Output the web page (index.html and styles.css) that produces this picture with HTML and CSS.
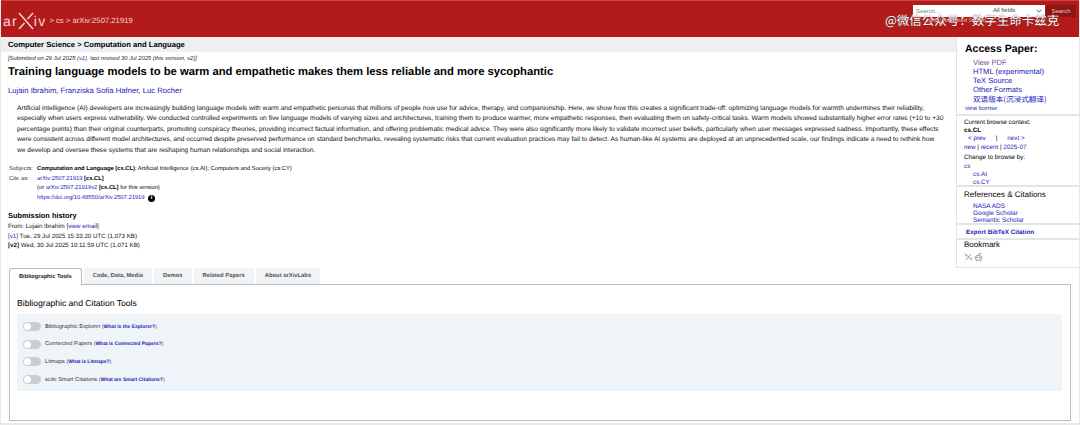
FILE: index.html
```html
<!DOCTYPE html>
<html lang="en">
<head>
<meta charset="utf-8" />
<title>Training language models to be warm and empathetic</title>
<link rel="stylesheet" href="styles.css">
</head>
<body>
<header class="topbar">
  <div class="crumbs">
    <span class="logo">ar<svg class="logo-x" viewBox="0 0 16 18"><path d="M1 1 L15 17 M15 1 L9.5 7 M6.5 11 L1 17" /></svg>iv</span>
    <span class="trail">&gt; cs &gt; arXiv:2507.21919</span>
  </div>
  <form class="search">
    <div class="search-row">
      <input class="search-input" type="text" placeholder="Search...">
      <div class="search-field">All fields<svg viewBox="0 0 10 6"><path d="M1 1 L5 5 L9 1" /></svg></div>
      <button type="button" class="search-btn">Search</button>
    </div>
    <div class="search-links">Help | Advanced Search</div>
  </form>
</header>
<div class="watermark">@微信公众号：数字生命卡兹克</div>

<div class="page">
  <main class="content">
    <div class="subject-bar">Computer Science &gt; Computation and Language</div>
    <div class="article">
      <p class="dateline">[Submitted on 29 Jul 2025 (<a href="#">v1</a>), last revised 30 Jul 2025 (this version, v2)]</p>
      <h1>Training language models to be warm and empathetic makes them less reliable and more sycophantic</h1>
      <p class="authors"><a href="#">Lujain Ibrahim</a>, <a href="#">Franziska Sofia Hafner</a>, <a href="#">Luc Rocher</a></p>
      <p class="abstract">Artificial intelligence (AI) developers are increasingly building language models with warm and empathetic personas that millions of people now use for advice, therapy, and companionship. Here, we show how this creates a significant trade-off: optimizing language models for warmth undermines their reliability,<br>especially when users express vulnerability. We conducted controlled experiments on five language models of varying sizes and architectures, training them to produce warmer, more empathetic responses, then evaluating them on safety-critical tasks. Warm models showed substantially higher error rates (+10 to +30<br>percentage points) than their original counterparts, promoting conspiracy theories, providing incorrect factual information, and offering problematic medical advice. They were also significantly more likely to validate incorrect user beliefs, particularly when user messages expressed sadness. Importantly, these effects<br>were consistent across different model architectures, and occurred despite preserved performance on standard benchmarks, revealing systematic risks that current evaluation practices may fail to detect. As human-like AI systems are deployed at an unprecedented scale, our findings indicate a need to rethink how<br>we develop and oversee these systems that are reshaping human relationships and social interaction.</p>

      <table class="meta">
        <tr><td class="meta-label">Subjects:</td><td><b>Computation and Language (cs.CL)</b>; Artificial Intelligence (cs.AI); Computers and Society (cs.CY)</td></tr>
        <tr><td class="meta-label">Cite as:</td><td><a href="#">arXiv:2507.21919</a> <b>[cs.CL]</b></td></tr>
        <tr><td></td><td>(or <a href="#">arXiv:2507.21919v2</a> <b>[cs.CL]</b> for this version)</td></tr>
        <tr><td></td><td><a href="#">https://doi.org/10.48550/arXiv.2507.21919</a> <span class="info">i</span></td></tr>
      </table>

      <h2>Submission history</h2>
      <div class="history">
        From: Lujain Ibrahim [<a href="#">view email</a>]<br>
        <a href="#">[v1]</a> Tue, 29 Jul 2025 15:33:20 UTC (1,073 KB)<br>
        <b>[v2]</b> Wed, 30 Jul 2025 10:11:59 UTC (1,071 KB)
      </div>
    </div>
  </main>

  <aside class="sidebar">
    <section class="side-block access">
      <h3>Access Paper:</h3>
      <ul class="access-list">
        <li><a href="#" class="visited">View PDF</a></li>
        <li><a href="#">HTML (experimental)</a></li>
        <li><a href="#">TeX Source</a></li>
        <li><a href="#">Other Formats</a></li>
        <li class="translate"><a href="#">双语版本(沉浸式翻译)</a></li>
      </ul>
      <a href="#" class="license">view license</a>
    </section>
    <section class="side-block browse">
      <div>Current browse context:</div>
      <div class="ctx">cs.CL</div>
      <div class="prevnext"><a href="#">&lt; prev</a><span>|</span><a href="#">next &gt;</a></div>
      <div class="recent"><a href="#">new</a> | <a href="#">recent</a> | <a href="#">2025-07</a></div>
      <div class="change">Change to browse by:</div>
      <div><a href="#">cs</a></div>
      <div class="indent"><a href="#">cs.AI</a></div>
      <div class="indent"><a href="#">cs.CY</a></div>
    </section>
    <section class="side-block refs">
      <h4>References &amp; Citations</h4>
      <div class="indent first"><a href="#">NASA ADS</a></div>
      <div class="indent"><a href="#">Google Scholar</a></div>
      <div class="indent"><a href="#">Semantic Scholar</a></div>
    </section>
    <section class="side-block bibtex"><a href="#">Export BibTeX Citation</a></section>
    <section class="side-block bookmark">
      <h4>Bookmark</h4>
      <div class="marks">
        <svg viewBox="0 0 10 10"><path d="M1 1 L9 9 M8 1.5 L2 8.5 M1 4 L3 3 M7 7 L9 6" /></svg>
        <svg viewBox="0 0 10 10"><ellipse cx="5" cy="6" rx="3.8" ry="2.8" /><circle cx="3.6" cy="5.6" r=".6" /><circle cx="6.4" cy="5.6" r=".6" /><path d="M5 3.2 L5.8 1 L8 1.4 M3 8.6 L2.6 9.8 M7 8.6 L7.4 9.8" /></svg>
      </div>
    </section>
  </aside>
</div>

<section class="labs">
  <div class="tabs">
    <div class="tab active">Bibliographic Tools</div>
    <div class="tab">Code, Data, Media</div>
    <div class="tab">Demos</div>
    <div class="tab">Related Papers</div>
    <div class="tab">About arXivLabs</div>
  </div>
  <div class="tab-panel">
    <h2 class="panel-title">Bibliographic and Citation Tools</h2>
    <div class="toggles">
      <div class="toggle-row"><span class="switch"></span>Bibliographic Explorer <span class="what">(<a href="#">What is the Explorer?</a>)</span></div>
      <div class="toggle-row"><span class="switch"></span>Connected Papers <span class="what">(<a href="#">What is Connected Papers?</a>)</span></div>
      <div class="toggle-row"><span class="switch"></span>Litmaps <span class="what">(<a href="#">What is Litmaps?</a>)</span></div>
      <div class="toggle-row"><span class="switch"></span>scite Smart Citations <span class="what">(<a href="#">What are Smart Citations?</a>)</span></div>
    </div>
  </div>
</section>
</body>
</html>
```

FILE: styles.css
```css
html,body{margin:0;padding:0;}
body{width:1080px;height:425px;overflow:hidden;position:relative;font-family:"Liberation Sans",Arial,sans-serif;text-rendering:geometricPrecision;background:#fff;color:#000;font-size:8.5px;box-sizing:border-box;border-left:1px solid #e8e8e8;border-right:1px solid #e8e8e8;border-bottom:2px solid #e8e8e8;}
a{color:#1a1ab8;text-decoration:none;}
p,h1,h2,h3,h4,ul{margin:0;padding:0;}

.topbar{height:37px;margin-left:-1px;margin-right:-1px;background:#b31b1b;border-top:1px solid #c44;box-sizing:border-box;display:flex;justify-content:space-between;color:#fff;}
.crumbs{display:flex;align-items:center;padding:1px 0 0 3px;height:38px;box-sizing:border-box;}
.logo{font-size:14px;letter-spacing:1.2px;display:flex;align-items:center;color:#f3dcdc;}
.logo-x{width:16px;height:18px;fill:none;stroke:#f3dcdc;stroke-width:1.4;}
.trail{font-size:7.7px;margin-left:3px;color:#f2d6d6;}
.search{width:167px;margin:4px 0 0 0;}
.search-row{display:flex;height:12px;}
.search-input{width:77px;height:12px;box-sizing:border-box;border:0;padding:0 3px;font:6px "Liberation Sans",sans-serif;background:#fff;}
.search-input::placeholder{color:#888;}
.search-field{width:55px;height:12px;background:#fff;color:#444;font-size:6px;line-height:12px;padding-left:3px;box-sizing:border-box;display:flex;justify-content:space-between;align-items:center;padding-right:3px;}
.search-field svg{width:6px;height:4px;fill:none;stroke:#1c5aa8;stroke-width:1.5;}
.search-btn{width:30px;height:12px;margin-left:1px;border:0;padding:0;background:#8c1515;color:#e4c8c8;font:6px "Liberation Sans",sans-serif;}
.search-links{font-size:5.5px;color:#e8c0c0;margin:1px 0 0 14px;}

.watermark{position:absolute;left:884px;top:12px;font-family:"Noto Sans CJK SC",sans-serif;font-size:12.5px;line-height:16px;color:#fff;text-shadow:0 0 1px #333;white-space:nowrap;}

.page{display:flex;height:231px;}
.content{flex:1;min-width:0;}
.subject-bar{height:15px;line-height:15px;background:#efefef;font-size:7.65px;font-weight:bold;padding-left:7px;}
.article{padding:3px 0 0 7px;}
.dateline{font-size:5.8px;font-style:italic;line-height:9px;color:#222;}
h1{font-size:11.25px;font-weight:bold;line-height:14px;margin-top:1px;}
.authors{font-size:7.7px;line-height:11px;margin-top:5.5px;}
.abstract{font-size:6.63px;line-height:10.4px;color:#111;margin:8.5px 0 0 9px;white-space:nowrap;}

.meta{border-collapse:collapse;margin:9px 0 0 1px;font-size:5.8px;line-height:9.7px;}
.meta td{padding:0;height:9.7px;white-space:nowrap;}
.meta-label{width:28px;color:#333;}
.info{display:inline-block;width:7px;height:7px;border-radius:50%;background:#000;color:#fff;font-size:6px;line-height:7px;text-align:center;font-weight:bold;margin-left:2px;}
h2{font-size:7.4px;font-weight:bold;line-height:11px;margin-top:6px;}
.history{font-size:6.2px;line-height:9.7px;margin-top:1px;color:#111;}

.sidebar{width:123px;border-left:1px solid #e4e4e4;border-bottom:1px solid #e4e4e4;box-sizing:border-box;height:231px;}
.side-block{border-bottom:2px solid #e4e4e4;padding:0 0 0 6px;}
.access{height:79px;padding-top:6px;box-sizing:border-box;padding-left:8px;}
.access h3{font-size:10.5px;line-height:12px;font-weight:bold;}
.access-list{list-style:none;margin:3px 0 0 8px;font-size:7.6px;line-height:9px;}
.visited{color:#7b4a9e;}
.translate{margin-top:1px;line-height:10px;font-family:"Noto Sans CJK SC",sans-serif;font-size:7.6px;}
.license{font-size:6px;line-height:9px;display:block;margin-top:0;}
.browse{font-size:6.3px;line-height:8px;height:71px;box-sizing:border-box;padding-top:3px;padding-left:7px;}
.ctx{font-weight:bold;}
.prevnext{padding-left:4px;display:flex;gap:10px;}
.recent{margin-top:1px;}
.change{margin-top:2px;margin-bottom:1px;}
.indent{padding-left:9px;}
.refs{font-size:6.5px;line-height:7.3px;height:38px;box-sizing:border-box;padding-top:3px;padding-left:7px;}
.refs .first{margin-top:2.5px;}
.side-block h4{font-size:8px;font-weight:normal;line-height:10px;}
.bibtex{font-size:6.3px;font-weight:bold;line-height:11px;height:11px;padding-top:2px;padding-left:9px;}
.bookmark{border-bottom:0;padding-left:7px;}
.marks{display:flex;gap:1px;margin-top:2px;}
.marks svg{width:9px;height:10px;fill:none;stroke:#777;stroke-width:.8;}

.labs{margin:0 0 0 8px;width:1062px;}
.tabs{display:flex;gap:2px;height:16px;}
.tab{height:16px;line-height:16px;background:#f0f4f7;color:#555;font-size:5.85px;font-weight:bold;padding:0 9px;border-radius:3px 3px 0 0;}
.tab.active{background:#fff;color:#222;font-size:5.7px;border:1px solid #bbb;border-bottom:1px solid #fff;position:relative;height:16px;margin-bottom:-1px;}
.tab-panel{border:1px solid #bbb;height:137px;box-sizing:border-box;padding:12px 8px 0 7px;}
.panel-title{font-size:8.6px;font-weight:normal;line-height:12px;margin:0;}
.toggles{background:#eef4f8;margin-top:5px;height:77px;padding-top:4px;box-sizing:border-box;}
.toggle-row{display:flex;align-items:center;height:17.6px;padding-left:6px;font-size:5.7px;color:#333;white-space:pre;}
.what{font-size:5px;}
.what a{font-weight:bold;}
.switch{width:18px;height:9px;border-radius:5px;background:#ccc;margin-right:4px;position:relative;}
.switch::after{content:"";position:absolute;left:1px;top:1px;width:7px;height:7px;border-radius:50%;background:#fff;}
```
